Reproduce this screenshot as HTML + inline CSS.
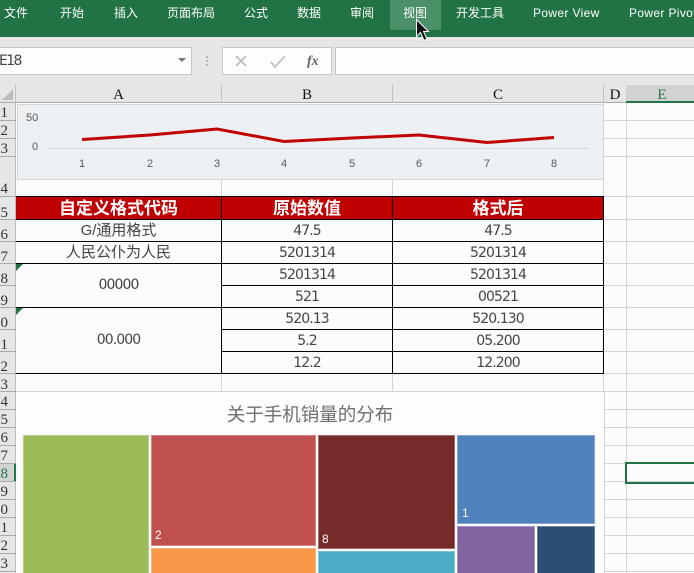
<!DOCTYPE html>
<html><head><meta charset="utf-8">
<style>
html,body{margin:0;padding:0;width:694px;height:573px;overflow:hidden;background:#fcfcfc}
#p{width:694px;height:573px;overflow:hidden;position:relative;background:#fcfcfc;font-family:"Liberation Sans","Noto Sans CJK SC",sans-serif}
.a{position:absolute}
.t{position:absolute;color:#fff;font-size:12px;line-height:16px;top:5px;white-space:nowrap}
.h{position:absolute;top:86px;height:16px;font:15px/18px "Liberation Serif",serif;color:#111;text-align:center}
.r{position:absolute;left:-5px;width:13px;font:15px/17px "Liberation Serif",serif;color:#333;text-align:right}
.hl{position:absolute;left:0;width:16px;height:1px;background:#aaa}
.gh{position:absolute;left:604px;width:90px;height:1px;background:#d4d4d4}
.c{position:absolute;text-align:center;font-size:14px;line-height:22px;color:#444;height:22px;font-family:"DejaVu Sans","Noto Sans CJK SC",sans-serif;letter-spacing:-.9px}
.cn{font-family:"Liberation Sans","Noto Sans CJK SC",sans-serif;letter-spacing:0;font-size:15px}
.b{position:absolute;background:#000}
.th{position:absolute;top:197px;height:23px;line-height:24px;text-align:center;color:#fff;font-size:17px;font-weight:bold}
.x{position:absolute;top:157px;font-size:11px;line-height:14px;color:#595959;width:16px;text-align:center}
.m{position:absolute;box-sizing:border-box;border:1px solid rgba(255,255,255,.3)}
.n{position:absolute;color:#fff;font-size:12px;line-height:14px}
</style></head><body><div id="p">
<!-- ribbon -->
<div class="a" style="left:0;top:0;width:694px;height:37px;background:#217346"></div>
<div class="a" style="left:390px;top:0;width:51px;height:30px;background:#4b9068"></div>
<div class="t" style="left:4px">文件</div>
<div class="t" style="left:60px">开始</div>
<div class="t" style="left:114px">插入</div>
<div class="t" style="left:167px">页面布局</div>
<div class="t" style="left:244px">公式</div>
<div class="t" style="left:297px">数据</div>
<div class="t" style="left:350px">审阅</div>
<div class="t" style="left:403px">视图</div>
<div class="t" style="left:456px">开发工具</div>
<div class="t" style="left:533px;letter-spacing:.35px">Power View</div>
<div class="t" style="left:629px;letter-spacing:.35px">Power Pivot</div>
<!-- formula bar -->
<div class="a" style="left:0;top:37px;width:694px;height:66px;background:#e6e6e6"></div>
<div class="a" style="left:-2px;top:47px;width:192px;height:26px;background:#fdfdfd;border:1px solid #c6c6c6"></div>
<div class="a" style="left:-1px;top:52px;font:14px/18px 'DejaVu Sans',sans-serif;letter-spacing:-1.6px;color:#444">E18</div>
<div class="a" style="left:178px;top:58px;width:0;height:0;border-left:4px solid transparent;border-right:4px solid transparent;border-top:4px solid #777"></div>
<div class="a" style="left:206px;top:56px;width:2px;height:2px;background:#b5b5b5;box-shadow:0 4px 0 #b5b5b5,0 8px 0 #b5b5b5"></div>
<div class="a" style="left:222px;top:47px;width:108px;height:26px;background:#fdfdfd;border:1px solid #c6c6c6"></div>
<svg class="a" style="left:222px;top:47px" width="110" height="28"><path d="M14 9L24 19M24 9L14 19" stroke="#bdbdbd" stroke-width="1.6" fill="none"/><path d="M49 15L53 20L63 9" stroke="#c4c4c4" stroke-width="2" fill="none"/><text x="85" y="18" font-family="Liberation Serif,serif" font-style="italic" font-weight="bold" font-size="14" fill="#666">fx</text></svg>
<div class="a" style="left:335px;top:47px;width:370px;height:26px;background:#fdfdfd;border:1px solid #c6c6c6"></div>
<!-- col headers -->
<div class="a" style="left:0;top:85px;width:694px;height:17px;background:#e6e6e6"></div>
<div class="a" style="left:0;top:102px;width:626px;height:1px;background:#aaa"></div>
<svg class="a" style="left:0;top:85px" width="16" height="18"><path d="M13 4V15H2Z" fill="#bcbcbc"/></svg>
<div class="a" style="left:15px;top:85px;width:1px;height:18px;background:#c0c0c0"></div>
<div class="a" style="left:221px;top:85px;width:1px;height:18px;background:#c0c0c0"></div>
<div class="a" style="left:392px;top:85px;width:1px;height:18px;background:#c0c0c0"></div>
<div class="a" style="left:603px;top:85px;width:1px;height:18px;background:#c0c0c0"></div>
<div class="a" style="left:626px;top:85px;width:68px;height:16px;background:#d2d2d2"></div>
<div class="a" style="left:626px;top:101px;width:68px;height:2px;background:#217346"></div>
<div class="h" style="left:16px;width:205px">A</div>
<div class="h" style="left:222px;width:170px">B</div>
<div class="h" style="left:393px;width:210px">C</div>
<div class="h" style="left:604px;width:22px">D</div>
<div class="h" style="left:626px;width:72px;color:#217346">E</div>
<!-- row headers -->
<div class="a" style="left:0;top:103px;width:16px;height:470px;background:#e6e6e6"></div>
<div class="a" style="left:15px;top:103px;width:1px;height:470px;background:#bdbdbd"></div>
<div class="a" style="left:0;top:463px;width:16px;height:19px;background:#d2d2d2"></div>
<div class="a" style="left:14px;top:463px;width:2px;height:19px;background:#217346"></div>
<div class="hl" style="top:120px"></div><div class="hl" style="top:138px"></div><div class="hl" style="top:156px"></div><div class="hl" style="top:196px"></div><div class="hl" style="top:219px"></div><div class="hl" style="top:241px"></div><div class="hl" style="top:285px"></div><div class="hl" style="top:263px"></div><div class="hl" style="top:307px"></div><div class="hl" style="top:329px"></div><div class="hl" style="top:351px"></div><div class="hl" style="top:373px"></div><div class="hl" style="top:391px"></div><div class="hl" style="top:409px"></div><div class="hl" style="top:427px"></div><div class="hl" style="top:445px"></div><div class="hl" style="top:463px"></div><div class="hl" style="top:481px"></div><div class="hl" style="top:499px"></div><div class="hl" style="top:517px"></div><div class="hl" style="top:535px"></div><div class="hl" style="top:553px"></div><div class="hl" style="top:571px"></div>
<div class="r" style="top:105px">1</div><div class="r" style="top:123px">2</div><div class="r" style="top:141px">3</div><div class="r" style="top:181px">4</div><div class="r" style="top:205px">5</div><div class="r" style="top:227px">6</div><div class="r" style="top:249px">7</div><div class="r" style="top:271px">8</div><div class="r" style="top:293px">9</div><div class="r" style="top:315px">0</div><div class="r" style="top:337px">1</div><div class="r" style="top:359px">2</div><div class="r" style="top:377px">3</div><div class="r" style="top:394px">4</div><div class="r" style="top:412px">5</div><div class="r" style="top:430px">6</div><div class="r" style="top:448px">7</div><div class="r" style="top:466px;color:#217346">8</div><div class="r" style="top:484px">9</div><div class="r" style="top:502px">0</div><div class="r" style="top:520px">1</div><div class="r" style="top:538px">2</div><div class="r" style="top:556px">3</div>
<!-- grid -->
<div class="a" style="left:626px;top:103px;width:1px;height:470px;background:#d4d4d4"></div>
<div class="a" style="left:603px;top:103px;width:1px;height:288px;background:#d4d4d4"></div>
<div class="a" style="left:221px;top:179px;width:1px;height:17px;background:#d4d4d4"></div>
<div class="a" style="left:392px;top:179px;width:1px;height:17px;background:#d4d4d4"></div>
<div class="a" style="left:221px;top:374px;width:1px;height:17px;background:#d4d4d4"></div>
<div class="a" style="left:392px;top:374px;width:1px;height:17px;background:#d4d4d4"></div>
<div class="gh" style="top:120px"></div><div class="gh" style="top:138px"></div><div class="gh" style="top:156px"></div><div class="gh" style="top:196px"></div><div class="gh" style="top:219px"></div><div class="gh" style="top:241px"></div><div class="gh" style="top:263px"></div><div class="gh" style="top:285px"></div><div class="gh" style="top:307px"></div><div class="gh" style="top:329px"></div><div class="gh" style="top:351px"></div><div class="gh" style="top:373px"></div><div class="gh" style="top:391px"></div><div class="gh" style="top:409px"></div><div class="gh" style="top:427px"></div><div class="gh" style="top:445px"></div><div class="gh" style="top:463px"></div><div class="gh" style="top:481px"></div><div class="gh" style="top:499px"></div><div class="gh" style="top:517px"></div><div class="gh" style="top:535px"></div><div class="gh" style="top:553px"></div><div class="gh" style="top:571px"></div>
<!-- selected cell -->
<div class="a" style="left:625px;top:462px;width:72px;height:18px;border:2px solid #217346;box-sizing:content-box"></div>
<!-- chart 1 -->
<div class="a" style="left:17px;top:104px;width:586px;height:76px;box-sizing:border-box;background:#ecf0f3;border:1px solid #d4d4d4;border-right:0"></div>
<div class="a" style="left:48px;top:148px;width:540px;height:1px;background:#d4d4d4"></div>
<div class="a" style="left:26px;top:111px;font-size:11px;line-height:14px;color:#595959">50</div>
<div class="a" style="left:32px;top:140px;font-size:11px;line-height:14px;color:#595959">0</div>
<div class="x" style="left:74px">1</div><div class="x" style="left:142px">2</div><div class="x" style="left:209px">3</div><div class="x" style="left:276px">4</div><div class="x" style="left:344px">5</div><div class="x" style="left:411px">6</div><div class="x" style="left:479px">7</div><div class="x" style="left:546px">8</div>
<svg class="a" style="left:0;top:100px" width="600" height="60"><path d="M82 39.500L150 35L217 29L284 41.500L352 38L419 35L487 42.500L554 37.500" fill="none" stroke="#c00000" stroke-width="3"/></svg>
<!-- table -->
<div class="a" style="left:16px;top:196px;width:588px;height:23px;background:#c00000"></div>
<div class="th" style="left:16px;width:205px">自定义格式代码</div>
<div class="th" style="left:222px;width:170px">原始数值</div>
<div class="th" style="left:393px;width:210px">格式后</div>
<div class="b" style="left:16px;top:196px;width:588px;height:1px"></div>
<div class="b" style="left:16px;top:219px;width:588px;height:1px"></div>
<div class="b" style="left:16px;top:241px;width:588px;height:1px"></div>
<div class="b" style="left:16px;top:263px;width:588px;height:1px"></div>
<div class="b" style="left:221px;top:285px;width:383px;height:1px"></div>
<div class="b" style="left:16px;top:307px;width:588px;height:1px"></div>
<div class="b" style="left:221px;top:329px;width:383px;height:1px"></div>
<div class="b" style="left:221px;top:351px;width:383px;height:1px"></div>
<div class="b" style="left:16px;top:373px;width:588px;height:1px"></div>
<div class="b" style="left:221px;top:196px;width:1px;height:178px"></div>
<div class="b" style="left:392px;top:196px;width:1px;height:178px"></div>
<div class="b" style="left:603px;top:196px;width:1px;height:178px"></div>
<svg class="a" style="left:16px;top:264px" width="8" height="8"><path d="M0 0H7L0 7Z" fill="#217346"/></svg>
<svg class="a" style="left:16px;top:308px" width="8" height="8"><path d="M0 0H7L0 7Z" fill="#217346"/></svg>
<div class="c cn" style="left:16px;top:220px;width:205px">G/通用格式</div>
<div class="c cn" style="left:16px;top:242px;width:205px">人民公仆为人民</div>
<div class="c" style="left:16px;top:274px;width:205px">00000</div>
<div class="c" style="left:16px;top:329px;width:205px">00.000</div>
<div class="c" style="left:222px;top:220px;width:170px">47.5</div><div class="c" style="left:393px;top:220px;width:210px">47.5</div>
<div class="c" style="left:222px;top:242px;width:170px">5201314</div><div class="c" style="left:393px;top:242px;width:210px">5201314</div>
<div class="c" style="left:222px;top:264px;width:170px">5201314</div><div class="c" style="left:393px;top:264px;width:210px">5201314</div>
<div class="c" style="left:222px;top:286px;width:170px">521</div><div class="c" style="left:393px;top:286px;width:210px">00521</div>
<div class="c" style="left:222px;top:308px;width:170px">520.13</div><div class="c" style="left:393px;top:308px;width:210px">520.130</div>
<div class="c" style="left:222px;top:330px;width:170px">5.2</div><div class="c" style="left:393px;top:330px;width:210px">05.200</div>
<div class="c" style="left:222px;top:352px;width:170px">12.2</div><div class="c" style="left:393px;top:352px;width:210px">12.200</div>
<!-- chart 2 -->
<div class="a" style="left:16px;top:391px;width:589px;height:182px;box-sizing:border-box;background:#fdfdfd;border:1px solid #d4d4d4;border-bottom:0;border-left:0"></div>
<div class="a" style="left:10px;top:403px;width:600px;text-align:center;font-size:18.500px;line-height:24px;color:#6f6f6f">关于手机销量的分布</div>
<div class="m" style="left:23px;top:435px;width:126px;height:150px;background:#9bbb59"></div>
<div class="m" style="left:151px;top:435px;width:165px;height:111px;background:#c0504d"></div>
<div class="m" style="left:151px;top:548px;width:165px;height:40px;background:#f79646"></div>
<div class="m" style="left:318px;top:435px;width:137px;height:114px;background:#772c2a"></div>
<div class="m" style="left:318px;top:551px;width:137px;height:40px;background:#4bacc6"></div>
<div class="m" style="left:457px;top:435px;width:138px;height:89px;background:#4f81bd"></div>
<div class="m" style="left:457px;top:526px;width:78px;height:60px;background:#8064a2"></div>
<div class="m" style="left:537px;top:526px;width:58px;height:60px;background:#2c4d75"></div>
<div class="n" style="left:155px;top:528px">2</div>
<div class="n" style="left:322px;top:532px">8</div>
<div class="n" style="left:462px;top:506px">1</div>
<!-- cursor -->
<svg class="a" style="left:414px;top:17px" width="16" height="26"><path d="M2.500 2.500V19.500L6.500 15.500L10 23.500L13 22L9.500 14.500H14.500Z" fill="#111" stroke="#fff" stroke-width="1"/></svg>
</div></body></html>
